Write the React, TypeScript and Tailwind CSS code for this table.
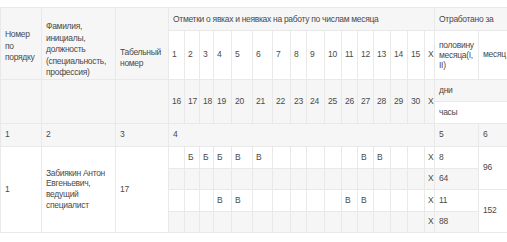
import React from 'react';

const dayWidths = [16, 15, 14, 18, 21, 20, 18, 16, 18, 17, 16, 16, 17, 17, 17, 10];

const firstHalf = ['1', '2', '3', '4', '5', '6', '7', '8', '9', '10', '11', '12', '13', '14', '15', 'X'];
const secondHalf = ['16', '17', '18', '19', '20', '21', '22', '23', '24', '25', '26', '27', '28', '29', '30', 'X'];

const rows = [
    { marks: ['', 'Б', 'Б', 'Б', 'В', 'В', '', '', '', '', '', 'В', 'В', '', '', 'X'], value: '8', month: '96' },
    { marks: ['', '', '', '', '', '', '', '', '', '', '', '', '', '', '', 'X'], value: '64' },
    { marks: ['', '', '', 'В', 'В', '', '', '', '', '', 'В', 'В', '', '', '', 'X'], value: '11', month: '152' },
    { marks: ['', '', '', '', '', '', '', '', '', '', '', '', '', '', '', 'X'], value: '88' },
];

const td = 'border border-[#e9e9e9] px-[4px] align-middle';
const day = 'border border-[#e9e9e9] px-[3px] align-middle';

const App = () => {
    return (
        <div className="w-[507px] h-[242px] overflow-hidden bg-white pt-[7px] font-['Liberation_Sans',Arial,sans-serif] text-[8.5px] leading-[11px] tracking-[-0.3px] text-[#4a4a4a]">
            <table className="table-fixed border-collapse w-[508px]">
                <colgroup>
                    <col className="w-[41px]" />
                    <col className="w-[74px]" />
                    <col className="w-[53px]" />
                    {dayWidths.map((w, i) => (
                        <col key={i} style={{ width: w }} />
                    ))}
                    <col className="w-[44px]" />
                    <col className="w-[30px]" />
                </colgroup>
                <tbody>
                    {/* Header */}
                    <tr className="h-[23px] bg-[#f6f6f6]">
                        <td rowSpan={2} className="border border-[#e9e9e9] px-[4px] align-top pt-[21px] leading-[11.5px]">
                            Номер по порядку
                        </td>
                        <td rowSpan={2} className="border border-[#e9e9e9] px-[4px] align-top pt-[13px] leading-[11.5px]">
                            Фамилия, инициалы, должность (специальность, профессия)
                        </td>
                        <td rowSpan={2} className="border border-[#e9e9e9] px-[4px] align-top pt-[39px]">
                            Табельный номер
                        </td>
                        <td colSpan={16} className={td}>Отметки о явках и неявках на работу по числам месяца</td>
                        <td colSpan={2} className={td}>Отработано за</td>
                    </tr>
                    <tr className="h-[48px] bg-white">
                        {firstHalf.map((d, i) => (
                            <td key={i} className={day}>{d}</td>
                        ))}
                        <td className={`${td} leading-[10px]`}>половину месяца(I, II)</td>
                        <td className={td}>месяц</td>
                    </tr>
                    <tr className="h-[22px] bg-[#f6f6f6]">
                        <td rowSpan={2} className={td}></td>
                        <td rowSpan={2} className={td}></td>
                        <td rowSpan={2} className={td}></td>
                        {secondHalf.map((d, i) => (
                            <td key={i} rowSpan={2} className={day}>{d}</td>
                        ))}
                        <td colSpan={2} className={td}>дни</td>
                    </tr>
                    <tr className="h-[22px] bg-white">
                        <td colSpan={2} className={td}>часы</td>
                    </tr>
                    <tr className="h-[23px] bg-[#f6f6f6]">
                        <td className={td}>1</td>
                        <td className={td}>2</td>
                        <td className={td}>3</td>
                        <td colSpan={16} className={td}>4</td>
                        <td className={td}>5</td>
                        <td className={td}>6</td>
                    </tr>

                    {/* Employee rows */}
                    {rows.map((r, ri) => (
                        <tr key={ri} className={ri % 2 === 0 ? 'h-[22px] bg-white' : 'h-[21px] bg-[#f6f6f6]'}>
                            {ri === 0 && (
                                <>
                                    <td rowSpan={4} className={`${td} bg-white`}>1</td>
                                    <td rowSpan={4} className={`${td} bg-white leading-[10.7px]`}>
                                        Забиякин Антон Евгеньевич, ведущий специалист
                                    </td>
                                    <td rowSpan={4} className={`${td} bg-white`}>17</td>
                                </>
                            )}
                            {r.marks.map((m, i) => (
                                <td key={i} className={day}>{m}</td>
                            ))}
                            <td className={td}>{r.value}</td>
                            {r.month && (
                                <td rowSpan={2} className={`${td} bg-white`}>{r.month}</td>
                            )}
                        </tr>
                    ))}
                </tbody>
            </table>
        </div>
    );
};

export default App;
